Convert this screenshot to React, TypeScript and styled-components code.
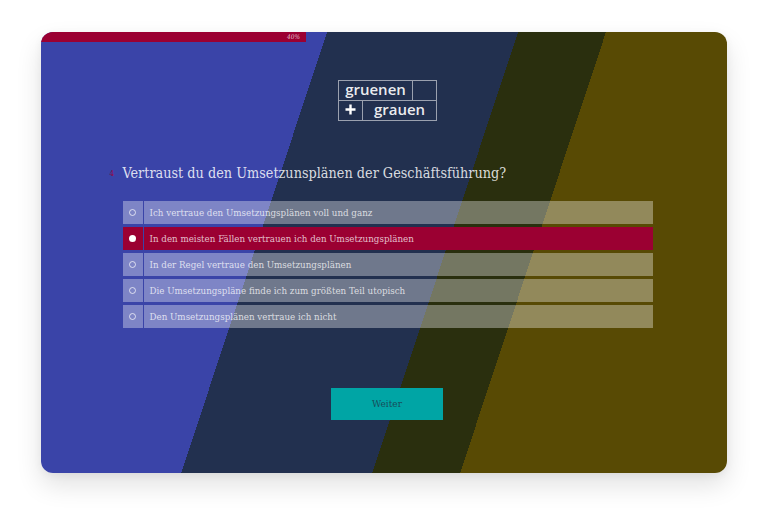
import React, { useState } from 'react';
import styled, { createGlobalStyle } from 'styled-components';

const GlobalStyle = createGlobalStyle`
  html, body {
    margin: 0;
    padding: 0;
    background: #fff;
    height: 100%;
    overflow: hidden;
  }
`;

const serif = `'DejaVu Serif Condensed', 'Liberation Serif', serif`;

const Page = styled.div`
  width: 768px;
  height: 523px;
  padding: 32px 41px 50px;
  box-sizing: border-box;
  font-family: ${serif};
`;

const Card = styled.div`
  width: 686px;
  height: 441px;
  border-radius: 12px;
  overflow: hidden;
  display: flex;
  flex-direction: column;
  box-shadow: 0 12px 26px rgba(0, 0, 0, 0.12), 0 2px 8px rgba(0, 0, 0, 0.05);
  background: linear-gradient(
    108.3deg,
    #3a44a8 0 271.6px,
    #22304f 271.6px 452.9px,
    #2a2f0e 452.9px 536.4px,
    #584a04 536.4px
  );
`;

const ProgressTrack = styled.div`
  height: 10px;
  flex: none;
`;

const ProgressFill = styled.div<{ $percent: number }>`
  width: ${props => props.$percent}%;
  min-width: 265px;
  max-width: 265px;
  height: 100%;
  background: #9b0032;
  color: rgba(255, 255, 255, 0.75);
  font-size: 6.5px;
  font-style: italic;
  line-height: 10px;
  text-align: right;
  padding-right: 6px;
  box-sizing: border-box;
`;

const Content = styled.div`
  flex: 1;
  padding-left: 7px;
  display: flex;
  flex-direction: column;
  align-items: center;
`;

const Logo = styled.div`
  margin-top: 38px;
  width: 99px;
  height: 41px;
  box-sizing: border-box;
  border: 1.5px solid rgba(255, 255, 255, 0.55);
  display: flex;
  flex-direction: column;
  font-family: 'Open Sans', sans-serif;
  font-weight: 600;
  font-size: 15px;
  color: rgba(255, 255, 255, 0.92);
`;

const LogoRow = styled.div<{ $top?: boolean }>`
  flex: 1;
  display: flex;
  border-bottom: ${props => (props.$top ? '1.5px solid rgba(255, 255, 255, 0.55)' : 'none')};
`;

const LogoCell = styled.div<{ $width?: number; $last?: boolean }>`
  width: ${props => (props.$width ? `${props.$width}px` : 'auto')};
  flex: ${props => (props.$width ? 'none' : '1')};
  display: flex;
  align-items: center;
  justify-content: center;
  line-height: 1;
  padding-bottom: 2px;
  box-sizing: border-box;
  border-right: ${props => (props.$last ? 'none' : '1.5px solid rgba(255, 255, 255, 0.55)')};
`;

const Question = styled.div`
  margin-top: 41px;
  width: 530px;
  position: relative;
  font-size: 14.3px;
  line-height: 22px;
  color: rgba(255, 255, 255, 0.84);
  white-space: nowrap;
`;

const QuestionNumber = styled.span`
  position: absolute;
  left: -13px;
  top: 1px;
  font-size: 8px;
  color: #8c0a46;
`;

const OptionList = styled.div`
  margin-top: 17px;
  width: 530px;
  display: flex;
  flex-direction: column;
  gap: 3.2px;
`;

const Option = styled.div`
  height: 22.8px;
  display: flex;
  gap: 1px;
  cursor: pointer;
`;

const Indicator = styled.div<{ $selected: boolean }>`
  width: 20px;
  flex: none;
  display: flex;
  align-items: center;
  justify-content: center;
  background: ${props => (props.$selected ? '#9b0032' : 'rgba(255, 255, 255, 0.35)')};
`;

const Radio = styled.span<{ $selected: boolean }>`
  width: 7px;
  height: 7px;
  box-sizing: border-box;
  border-radius: 50%;
  border: 1px solid rgba(255, 255, 255, 0.7);
  background: ${props => (props.$selected ? '#fff' : 'transparent')};
`;

const OptionLabel = styled.div<{ $selected: boolean }>`
  flex: 1;
  padding-left: 6px;
  display: flex;
  align-items: center;
  font-size: 9.7px;
  white-space: nowrap;
  color: rgba(255, 255, 255, 0.75);
  background: ${props => (props.$selected ? '#9b0032' : 'rgba(255, 255, 255, 0.35)')};
`;

const NextButton = styled.button`
  margin: 60px 1px 0 0;
  width: 112px;
  height: 32px;
  border: none;
  padding: 0;
  background: #00a5a5;
  color: #174e5a;
  font-family: ${serif};
  font-size: 10px;
  font-weight: 400;
`;

const options = [
  'Ich vertraue den Umsetzungsplänen voll und ganz',
  'In den meisten Fällen vertrauen ich den Umsetzungsplänen',
  'In der Regel vertraue den Umsetzungsplänen',
  'Die Umsetzungspläne finde ich zum größten Teil utopisch',
  'Den Umsetzungsplänen vertraue ich nicht',
];

export default function App() {
  const [selected, setSelected] = useState(1);

  return (
    <Page>
      <GlobalStyle />
      <Card>
        <ProgressTrack>
          <ProgressFill $percent={40}>40%</ProgressFill>
        </ProgressTrack>
        <Content>
          <Logo>
            <LogoRow $top>
              <LogoCell $width={74}>gruenen</LogoCell>
              <LogoCell $last />
            </LogoRow>
            <LogoRow>
              <LogoCell $width={24}>
                <svg width="11" height="11" viewBox="0 0 11 11">
                  <path d="M5.5 0.5v10M0.5 5.5h10" stroke="#fff" strokeWidth="2.4" fill="none" />
                </svg>
              </LogoCell>
              <LogoCell $last>grauen</LogoCell>
            </LogoRow>
          </Logo>
          <Question>
            <QuestionNumber>4</QuestionNumber>
            Vertraust du den Umsetzunsplänen der Geschäftsführung?
          </Question>
          <OptionList>
            {options.map((text, i) => (
              <Option key={text} onClick={() => setSelected(i)}>
                <Indicator $selected={selected === i}>
                  <Radio $selected={selected === i} />
                </Indicator>
                <OptionLabel $selected={selected === i}>{text}</OptionLabel>
              </Option>
            ))}
          </OptionList>
          <NextButton>Weiter</NextButton>
        </Content>
      </Card>
    </Page>
  );
}
